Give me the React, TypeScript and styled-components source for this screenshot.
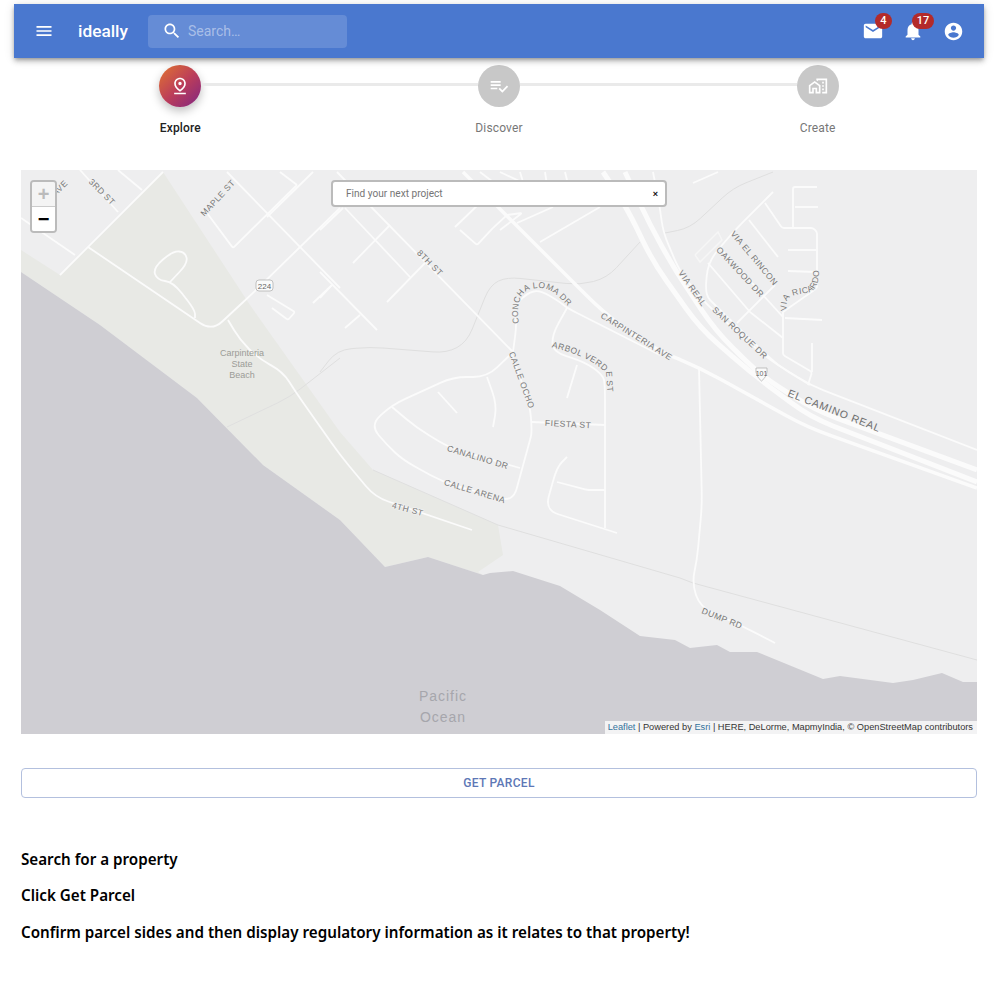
import React from 'react';
import styled, { createGlobalStyle } from 'styled-components';

const GlobalStyle = createGlobalStyle`
  html, body {
    margin: 0;
    padding: 0;
    background: #fff;
    font-family: Roboto, "Liberation Sans", sans-serif;
  }
`;

const Page = styled.div`
  width: 1000px;
  height: 982px;
  overflow: hidden;
  padding-top: 4px;
  box-sizing: border-box;
`;

const AppBar = styled.header`
  display: flex;
  align-items: center;
  height: 54px;
  margin: 0 16px 0 14px;
  padding: 0 11px 0 10px;
  background: #4a78cf;
  color: #fff;
  box-shadow: 0 2px 4px -1px rgba(0,0,0,.3), 0 4px 5px 0 rgba(0,0,0,.14), 0 1px 10px 0 rgba(0,0,0,.12);
  position: relative;
  z-index: 2;
`;

const IconButton = styled.div`
  position: relative;
  width: 40px;
  height: 48px;
  display: flex;
  align-items: center;
  justify-content: center;
  flex: none;
`;

const Title = styled.div`
  margin-left: 14px;
  width: 70px;
  font-size: 17.3px;
  font-weight: 500;
  flex: none;
`;

const SearchBox = styled.div`
  display: flex;
  align-items: center;
  gap: 6px;
  width: 199px;
  height: 33px;
  padding-left: 14px;
  box-sizing: border-box;
  background: rgba(255,255,255,.15);
  border-radius: 4px;
`;

const Placeholder = styled.span`
  font-size: 14px;
  color: rgba(255,255,255,.45);
`;

const Spacer = styled.div`
  flex: 1;
`;

const Badge = styled.span`
  position: absolute;
  top: 6px;
  left: ${props => props.$left}px;
  min-width: ${props => props.$width}px;
  height: 16px;
  border-radius: 8px;
  background: #b32a2a;
  color: #fff;
  font-size: 11px;
  font-weight: 500;
  line-height: 16px;
  text-align: center;
`;

const Stepper = styled.section`
  display: grid;
  grid-template-columns: repeat(3, 1fr);
  margin: 7px 23px 0 21px;
`;

const Step = styled.div`
  position: relative;
  display: flex;
  flex-direction: column;
  align-items: center;
`;

const Connector = styled.div`
  position: absolute;
  top: 18px;
  left: calc(-50% + 21px);
  right: calc(50% + 21px);
  height: 3px;
  background: #eaeaea;
`;

const StepCircle = styled.div`
  position: relative;
  width: 42px;
  height: 42px;
  border-radius: 50%;
  display: flex;
  align-items: center;
  justify-content: center;
  background: ${props => props.$active ? 'linear-gradient(136deg, #dc6c36 8%, #bb3d5a 52%, #84277f 96%)' : '#c8c8c8'};
  box-shadow: ${props => props.$active ? '0 4px 10px 0 rgba(0,0,0,.25)' : 'none'};
`;

const StepLabel = styled.div`
  margin-top: 14px;
  font-size: 12px;
  line-height: 14px;
  letter-spacing: .15px;
  font-weight: ${props => props.$active ? 500 : 400};
  color: ${props => props.$active ? '#222' : '#777'};
`;

const MapPanel = styled.section`
  position: relative;
  margin: 35px 23px 0 21px;
  height: 564px;
  background: #eeeeef;
  overflow: hidden;
`;

const MapDrawing = styled.svg`
  display: block;
  width: 956px;
  height: 564px;
`;

const ZoomBar = styled.div`
  position: absolute;
  top: 10px;
  left: 9px;
  width: 23px;
  border: 2px solid #bbb;
  border-radius: 4px;
  overflow: hidden;
`;

const ZoomButton = styled.div`
  height: 24px;
  display: flex;
  align-items: center;
  justify-content: center;
  font: bold 20px "Liberation Sans", sans-serif;
  color: ${props => props.$disabled ? '#bbb' : '#000'};
  background: ${props => props.$disabled ? '#f4f4f4' : '#fff'};
  border-bottom: ${props => props.$disabled ? '1px solid #ccc' : 'none'};
`;

const FindBox = styled.div`
  position: absolute;
  top: 10px;
  left: 310px;
  width: 336px;
  height: 27px;
  box-sizing: border-box;
  display: flex;
  align-items: center;
  justify-content: space-between;
  padding: 0 7px 0 13px;
  background: #fff;
  border: 2px solid #bbb;
  border-radius: 4px;
`;

const FindText = styled.span`
  font: 10.1px Roboto, "Liberation Sans", sans-serif;
  color: #757575;
`;

const FindClose = styled.span`
  font: bold 9px "Liberation Sans", sans-serif;
  color: #111;
`;

const Attribution = styled.div`
  position: absolute;
  right: 0;
  bottom: 0;
  height: 13px;
  padding: 0 4px 0 3px;
  background: rgba(255,255,255,.75);
  font: 9.25px/13px "Liberation Sans", sans-serif;
  color: #333;
  white-space: nowrap;
`;

const AttrLink = styled.span`
  color: #33729c;
`;

const OutlineButton = styled.button`
  display: block;
  width: 956px;
  height: 30px;
  margin: 34px 0 0 21px;
  background: #fff;
  border: 1px solid #b3c0de;
  border-radius: 4px;
  font: 500 12px Roboto, sans-serif;
  letter-spacing: .3px;
  color: #5d77b6;
  padding: 0;
`;

const Instructions = styled.div`
  margin: 50px 0 0 21px;
`;

const Line = styled.p`
  margin: 0 0 14.4px;
  font: 600 15.2px/22px "Noto Sans", "Open Sans", sans-serif;
  color: #000;
`;

const Roads = styled.g`
  fill: none;
  stroke: #fbfbfb;
  stroke-linejoin: round;
  stroke-linecap: butt;
`;

const StreetLabel = styled.text`
  font: 8.5px "Liberation Sans", sans-serif;
  letter-spacing: .5px;
  fill: #777;
  text-anchor: middle;
  paint-order: stroke;
  stroke: #f0f0f0;
  stroke-width: 1.5px;
`;

const PlaceLabel = styled.text`
  font: ${props => props.$size}px "Liberation Sans", sans-serif;
  letter-spacing: ${props => props.$spacing}px;
  fill: ${props => props.$color};
  text-anchor: middle;
`;

const MuiIcon = ({ d, size = 24, color = '#fff' }: { d: string; size?: number; color?: string }) => (
  <svg width={size} height={size} viewBox="0 0 24 24" fill={color}>
    <path d={d} />
  </svg>
);

const icons = {
  menu: 'M3 18h18v-2H3v2zm0-5h18v-2H3v2zm0-7v2h18V6H3z',
  search: 'M15.5 14h-.79l-.28-.27C15.41 12.59 16 11.11 16 9.5 16 5.91 13.09 3 9.5 3S3 5.91 3 9.5 5.91 16 9.5 16c1.61 0 3.09-.59 4.23-1.57l.27.28v.79l5 4.99L20.49 19l-4.99-5zm-6 0C7.01 14 5 11.99 5 9.5S7.01 5 9.5 5 14 7.01 14 9.5 11.99 14 9.5 14z',
  mail: 'M20 4H4c-1.1 0-1.99.9-1.99 2L2 18c0 1.1.9 2 2 2h16c1.1 0 2-.9 2-2V6c0-1.1-.9-2-2-2zm0 4l-8 5-8-5V6l8 5 8-5v2z',
  bell: 'M12 22c1.1 0 2-.9 2-2h-4c0 1.1.89 2 2 2zm6-6v-5c0-3.07-1.64-5.64-4.5-6.32V4c0-.83-.67-1.5-1.5-1.5s-1.5.67-1.5 1.5v.68C7.63 5.36 6 7.92 6 11v5l-2 2v1h16v-1l-2-2z',
  account: 'M12 2C6.48 2 2 6.48 2 12s4.48 10 10 10 10-4.48 10-10S17.52 2 12 2zm0 3c1.66 0 3 1.34 3 3s-1.34 3-3 3-3-1.34-3-3 1.34-3 3-3zm0 14.2c-2.5 0-4.71-1.28-6-3.22.03-1.99 4-3.08 6-3.08 1.99 0 5.97 1.09 6 3.08-1.29 1.94-3.5 3.22-6 3.22z',
  pin: 'M12 4c1.93 0 5 1.4 5 5.15 0 2.16-1.72 4.67-5 7.32-3.28-2.65-5-5.17-5-7.32C7 5.4 10.07 4 12 4m0-2C8.73 2 5 4.46 5 9.15c0 3.12 2.33 6.41 7 9.85 4.67-3.44 7-6.73 7-9.85C19 4.46 15.27 2 12 2zM12 7c-1.1 0-2 .9-2 2s.9 2 2 2c1.1 0 2-.9 2-2s-.9-2-2-2zM5 20h14v2H5v-2z',
  check: 'M14 10H2v2h12v-2zm0-4H2v2h12V6zM2 16h8v-2H2v2zm19.5-4.5L23 13l-6.99 7-4.51-4.5L13 14l3.01 3 5.49-5.5z',
  homeWork: 'M1 11v10h6v-5h2v5h6V11L8 6l-7 5zm12 8h-2v-5H5v5H3v-7l5-3.5 5 3.5v7zm4-12h2v2h-2zm0 4h2v2h-2zm0 4h2v2h-2zM10 3v1.97l2 1.43V5h9v14h-4v2h6V3z',
};

const steps = [
  { label: 'Explore', icon: icons.pin, active: true },
  { label: 'Discover', icon: icons.check, active: false },
  { label: 'Create', icon: icons.homeWork, active: false },
];

// turns "x,y x,y ..." into a path whose corners are cut with a curve of radius r
const roundedPath = (points: string, r: number) => {
  const pts = points.split(' ').map(p => p.split(',').map(Number));
  let d = `M${pts[0][0]},${pts[0][1]}`;
  for (let i = 1; i < pts.length - 1; i++) {
    const [px, py] = pts[i - 1];
    const [x, y] = pts[i];
    const [nx, ny] = pts[i + 1];
    const inLen = Math.hypot(x - px, y - py);
    const outLen = Math.hypot(nx - x, ny - y);
    const a = Math.min(r, inLen / 2) / inLen;
    const b = Math.min(r, outLen / 2) / outLen;
    d += ` L${x - (x - px) * a},${y - (y - py) * a} Q${x},${y} ${x + (nx - x) * b},${y + (ny - y) * b}`;
  }
  const last = pts[pts.length - 1];
  return `${d} L${last[0]},${last[1]}`;
};

// page coordinates, the viewBox of the map starts at 21,170
const waterShape = '21,272 100,325 197,398 263,465 340,520 385,567 428,557 483,575 490,573 513,571 560,586 600,610 640,636 675,640 690,648 717,645 730,652 757,652 823,679 840,676 893,683 913,680 942,673 963,682 977,682 977,734 21,734';
const parkShape = '21,250 60,275 88,247 163,172 250,305 340,432 373,470 498,525 503,555 478,572 483,575 428,557 385,567 340,520 263,465 197,398 100,325 21,272';

const trails = [
  '320,372 337,350 370,347 447,353 467,342 490,285 507,277 580,285 607,278 640,242',
  '227,427 290,397 340,358',
  '665,233 690,228 733,188 773,172',
];
const railroad = '373,470 498,525 680,578 693,583 977,660';

const straightRoads = [
  '21,218 75,255', '80,170 118,212', '118,170 142,190', '163,172 60,275',
  '207,213 233,248 297,185', '227,172 340,288', '267,217 313,172', '280,172 297,185', '313,303 332,285',
  '267,295 295,312 288,320 272,308',
  '337,172 513,352', '345,208 410,277', '320,272 377,330', '320,298 332,285', '345,328 360,315',
  '387,302 425,263', '353,263 390,225', '320,230 343,208',
  '532,422 605,425', '438,392 457,413', '557,482 587,490 605,490', '577,365 567,398',
  '455,227 480,203', '460,230 477,245 493,228 507,215 522,213 500,230', '540,242 600,207',
  '517,223 553,207', '480,172 510,195', '500,172 560,200', '520,172 530,205', '545,172 550,205', '565,172 572,200',
  '765,203 782,228 813,228 817,232 817,288 783,312', '793,228 793,187 817,187', '795,207 818,207',
  '788,250 816,250', '788,271 816,272', '749,220 778,257', '708,263 750,312 783,338', '720,248 783,317', '775,285 737,323',
  '783,312 783,355 812,372 808,385', '812,343 812,372', '785,318 822,320', '693,183 718,172',
];

const curvedRoads = [
  '88,247 212,331 253,293 340,208',
  '195,318 195,310 173,282 157,280 153,268 173,251 185,252 188,263 170,282',
  '228,320 240,340 258,358 283,372 295,391 340,455 375,497 472,530',
  '513,352 517,322 513,308 527,293 540,290 560,302 567,308 660,355',
  '567,308 552,335 553,352 585,362 603,375 605,385 605,528',
  '513,352 487,377 453,377 392,405 370,425 387,445 403,460 443,482 513,502 530,440',
  '512,355 530,405 532,432 530,440',
  '392,407 417,428 450,448 520,468', '487,377 497,405 493,427',
  '567,457 557,467 545,510 617,533',
  '773,192 733,232 708,262 705,295 715,305 777,365 810,385',
  '699,368 702,505 697,560 692,583 700,607 740,625 775,643',
  '653,172 660,208 663,232 680,272 707,305 767,358 810,385 977,450',
];

const wideRoads = [
  { points: '463,172 603,312 650,347 700,368 807,427 977,488', width: 3.5 },
  { points: '625,172 650,225 675,270 715,330 760,375 815,410 977,470', width: 5 },
  { points: '603,172 627,208 653,262 700,328 750,372 810,417 977,482', width: 5 },
];

const App: React.FC = () => (
  <Page>
    <GlobalStyle />
    <AppBar>
      <IconButton><MuiIcon d={icons.menu} size={20} /></IconButton>
      <Title>ideally</Title>
      <SearchBox>
        <MuiIcon d={icons.search} size={20} />
        <Placeholder>Search…</Placeholder>
      </SearchBox>
      <Spacer />
      <IconButton>
        <MuiIcon d={icons.mail} size={22} />
        <Badge $left={22} $width={17}>4</Badge>
      </IconButton>
      <IconButton>
        <MuiIcon d={icons.bell} size={22} />
        <Badge $left={19} $width={22}>17</Badge>
      </IconButton>
      <IconButton><MuiIcon d={icons.account} size={21} /></IconButton>
    </AppBar>

    <Stepper>
      {steps.map((s, i) => (
        <Step key={s.label}>
          {i > 0 && <Connector />}
          <StepCircle $active={s.active}><MuiIcon d={s.icon} size={20} /></StepCircle>
          <StepLabel $active={s.active}>{s.label}</StepLabel>
        </Step>
      ))}
    </Stepper>

    <MapPanel>
      <MapDrawing viewBox="21 170 956 564">
        <polygon points={parkShape} fill="#e8e9e5" />
        <polygon points={waterShape} fill="#cfced3" />
        <g fill="none" stroke="#dfdfdf" strokeWidth="1">
          {trails.map(p => <path key={p} d={roundedPath(p, 14)} />)}
          <polyline points={railroad} />
        </g>
        <polyline points="695,255 718,232 722,240 700,262 695,255" fill="none" stroke="#f6f6f6" strokeWidth="1.5" />
        <Roads strokeWidth="1.8">
          {straightRoads.map(p => <path key={p} d={roundedPath(p, 2)} />)}
          {curvedRoads.map(p => <path key={p} d={roundedPath(p, 14)} />)}
        </Roads>
        <Roads>
          {wideRoads.map(r => <path key={r.points} d={roundedPath(r.points, 24)} strokeWidth={r.width} />)}
        </Roads>

        <rect x="256" y="280" width="17" height="11" rx="3" fill="#fafafa" stroke="#aaa" strokeWidth=".7" />
        <PlaceLabel x="264.5" y="288.5" $size={8} $spacing={0} $color="#666">224</PlaceLabel>
        <path d="M756,368 h11 q1,8 -5.5,13 q-6.5,-5 -5.5,-13 z" fill="#fafafa" stroke="#aaa" strokeWidth=".7" />
        <PlaceLabel x="761.5" y="376" $size={7} $spacing={0} $color="#666">101</PlaceLabel>

        <defs>
          <path id="concha" d="M519,326 C515,296 524,288 540,288 C552,288 560,298 570,308" />
          <path id="arbol" d="M546,346 C575,352 596,362 606,373 L608,398" />
          <path id="ricardo" d="M789,318 C783,300 788,296 800,294 C814,292 820,290 819,262" />
        </defs>

        <StreetLabel transform="translate(62,190) rotate(-45)">AVE</StreetLabel>
        <StreetLabel transform="translate(100,194) rotate(45)">3RD ST</StreetLabel>
        <StreetLabel transform="translate(220,200) rotate(-47)">MAPLE ST</StreetLabel>
        <StreetLabel transform="translate(428,265) rotate(45)">8TH ST</StreetLabel>
        <StreetLabel><textPath href="#concha" startOffset="50%">CONCHA LOMA DR</textPath></StreetLabel>
        <StreetLabel><textPath href="#arbol" startOffset="50%">ARBOL VERDE ST</textPath></StreetLabel>
        <StreetLabel><textPath href="#ricardo" startOffset="50%">VIA RICARDO</textPath></StreetLabel>
        <StreetLabel transform="translate(635,339) rotate(32)">CARPINTERIA AVE</StreetLabel>
        <StreetLabel transform="translate(519,381) rotate(70)">CALLE OCHO</StreetLabel>
        <StreetLabel transform="translate(568,427) rotate(3)">FIESTA ST</StreetLabel>
        <StreetLabel transform="translate(477,460) rotate(17)">CANALINO DR</StreetLabel>
        <StreetLabel transform="translate(474,494) rotate(17)">CALLE ARENA</StreetLabel>
        <StreetLabel transform="translate(407,512) rotate(15)">4TH ST</StreetLabel>
        <StreetLabel transform="translate(721,621) rotate(22)">DUMP RD</StreetLabel>
        <StreetLabel transform="translate(752,260) rotate(50)">VIA EL RINCON</StreetLabel>
        <StreetLabel transform="translate(738,274) rotate(47)">OAKWOOD DR</StreetLabel>
        <StreetLabel transform="translate(690,290) rotate(55)">VIA REAL</StreetLabel>
        <StreetLabel transform="translate(738,335) rotate(43)">SAN ROQUE DR</StreetLabel>
        <PlaceLabel transform="translate(833,414) rotate(21.5)" $size={10.5} $spacing={.8} $color="#707070">EL CAMINO REAL</PlaceLabel>

        <PlaceLabel x="242" y="356" $size={9} $spacing={0} $color="#9b9c97">Carpinteria</PlaceLabel>
        <PlaceLabel x="242" y="367" $size={9} $spacing={0} $color="#9b9c97">State</PlaceLabel>
        <PlaceLabel x="242" y="378" $size={9} $spacing={0} $color="#9b9c97">Beach</PlaceLabel>
        <PlaceLabel x="443" y="701" $size={14} $spacing={1} $color="#a6a6ac">Pacific</PlaceLabel>
        <PlaceLabel x="443" y="722" $size={14} $spacing={1} $color="#a6a6ac">Ocean</PlaceLabel>
      </MapDrawing>

      <ZoomBar>
        <ZoomButton $disabled>+</ZoomButton>
        <ZoomButton>−</ZoomButton>
      </ZoomBar>
      <FindBox>
        <FindText>Find your next project</FindText>
        <FindClose>×</FindClose>
      </FindBox>
      <Attribution>
        <AttrLink>Leaflet</AttrLink> | Powered by <AttrLink>Esri</AttrLink> | HERE, DeLorme, MapmyIndia, © OpenStreetMap contributors
      </Attribution>
    </MapPanel>

    <OutlineButton>GET PARCEL</OutlineButton>

    <Instructions>
      <Line>Search for a property</Line>
      <Line>Click Get Parcel</Line>
      <Line>Confirm parcel sides and then display regulatory information as it relates to that property!</Line>
    </Instructions>
  </Page>
);

export default App;
